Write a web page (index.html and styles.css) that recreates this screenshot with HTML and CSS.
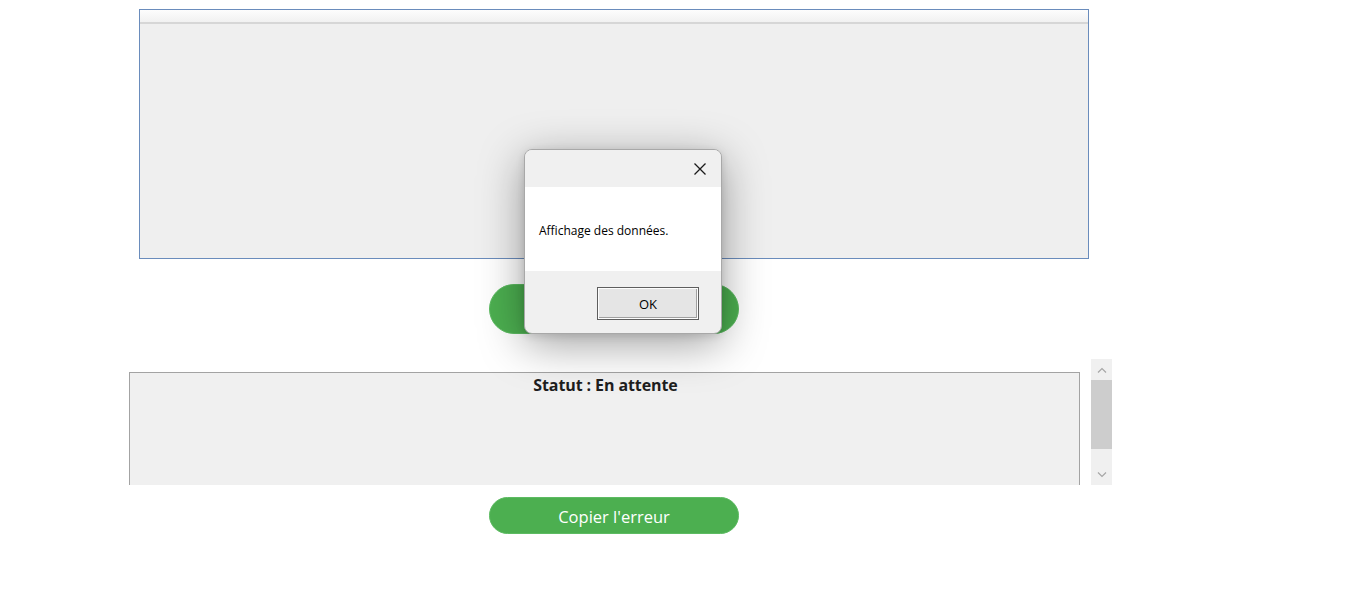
FILE: index.html
```html
<!DOCTYPE html>
<html lang="fr">
<head>
<meta charset="utf-8">
<title>Statut</title>
<link rel="stylesheet" href="styles.css">
</head>
<body>
<div class="page">
  <div class="grid-panel">
    <div class="grid-header"></div>
    <div class="grid-body"></div>
  </div>
  <button class="btn-green btn-big" type="button" aria-label="Afficher"></button>
  <div class="status-area">
    <div class="status-box">
      <div class="status-title">Statut : En attente</div>
    </div>
    <div class="scrollbar">
      <div class="sb-arrow">
        <svg width="10" height="6" viewBox="0 0 10 6"><path d="M1 5.5 L5 1.5 L9 5.5" fill="none" stroke="#a6a6a6" stroke-width="1.2"/></svg>
      </div>
      <div class="sb-thumb"></div>
      <div class="sb-track"></div>
      <div class="sb-arrow">
        <svg width="10" height="6" viewBox="0 0 10 6"><path d="M1 0.5 L5 4.5 L9 0.5" fill="none" stroke="#a6a6a6" stroke-width="1.2"/></svg>
      </div>
    </div>
  </div>
  <button class="btn-green btn-copy" type="button">Copier l'erreur</button>
</div>

<div class="dialog" role="dialog">
  <div class="dlg-title">
    <svg class="dlg-close" width="14" height="14" viewBox="0 0 14 14"><path d="M1.5 1.5 L12.5 12.5 M12.5 1.5 L1.5 12.5" stroke="#1a1a1a" stroke-width="1.3" fill="none"/></svg>
  </div>
  <div class="dlg-body">Affichage des données.</div>
  <div class="dlg-footer">
    <button class="dlg-ok" type="button">OK</button>
  </div>
</div>
</body>
</html>
```
FILE: styles.css
```css
html, body {
  margin: 0;
  padding: 0;
  background: #ffffff;
  font-family: "Open Sans", "Noto Sans", sans-serif;
}

.page {
  display: flex;
  flex-direction: column;
  align-items: flex-start;
  padding-top: 9px;
}

.grid-panel {
  margin-left: 139px;
  width: 948px;
  height: 248px;
  border: 1px solid #6a8cbc;
  background: #efefef;
  display: flex;
  flex-direction: column;
}

.grid-header {
  height: 12px;
  background: linear-gradient(#fdfdfd, #f1f1f1);
  border-bottom: 2px solid #d6d6d6;
}

.grid-body {
  flex: 1;
  background: #efefef;
}

.btn-green {
  background: #4caf50;
  color: #ffffff;
  border: 1px solid #5dbb62;
  font-family: "Open Sans", "Noto Sans", sans-serif;
  cursor: pointer;
  padding: 0;
}

.btn-big {
  margin-top: 25px;
  margin-left: 489px;
  width: 250px;
  height: 50px;
  border-radius: 25px;
}

.status-area {
  margin-top: 25px;
  margin-left: 129px;
  height: 126px;
  display: flex;
  gap: 11px;
  overflow: hidden;
}

.status-box {
  margin-top: 13px;
  width: 949px;
  height: 130px;
  border: 1px solid #a3a3a3;
  background: #f0f0f0;
}

.status-title {
  text-align: center;
  font-weight: 700;
  font-size: 16px;
  letter-spacing: -0.1px;
  color: #1e1e1e;
  line-height: 24px;
  margin-left: 2px;
}

.scrollbar {
  width: 21px;
  height: 126px;
  background: #f0f0f0;
  display: flex;
  flex-direction: column;
}

.sb-arrow {
  height: 21px;
  display: flex;
  align-items: center;
  justify-content: center;
}

.sb-thumb {
  height: 69px;
  background: #cdcdcd;
}

.sb-track {
  flex: 1;
}

.btn-copy {
  margin-top: 12px;
  margin-left: 489px;
  width: 250px;
  height: 37px;
  border-radius: 19px;
  font-size: 16.5px;
  line-height: 32px;
  padding-top: 3px;
}

.dialog {
  position: absolute;
  left: 524px;
  top: 149px;
  width: 196px;
  height: 183px;
  border: 1px solid #a8a8a8;
  border-radius: 8px;
  background: #f0f0f0;
  overflow: hidden;
  box-shadow: 0 10px 45px rgba(0, 0, 0, 0.38), 0 2px 8px rgba(0, 0, 0, 0.12);
  display: flex;
  flex-direction: column;
  font-family: "Open Sans", "Noto Sans", sans-serif;
}

.dlg-title {
  height: 37px;
  background: #f0f0f0;
  display: flex;
  justify-content: flex-end;
  align-items: center;
  padding-right: 14px;
}

.dlg-close {
  display: block;
}

.dlg-body {
  height: 84px;
  background: #ffffff;
  display: flex;
  align-items: center;
  padding-left: 14px;
  padding-top: 2px;
  box-sizing: border-box;
  font-size: 12px;
  color: #000000;
}

.dlg-footer {
  flex: 1;
  display: flex;
  justify-content: flex-end;
  align-items: flex-start;
  padding-top: 16px;
  padding-right: 22px;
}

.dlg-ok {
  width: 102px;
  height: 33px;
  background: #e5e5e5;
  border: 1px solid #5e5e5e;
  box-shadow: inset 0 0 0 1px #fdfdfd, inset -1px -1px 0 1px #a0a0a0;
  font-family: "Open Sans", "Noto Sans", sans-serif;
  font-size: 13px;
  color: #000000;
  padding: 0;
}
```
